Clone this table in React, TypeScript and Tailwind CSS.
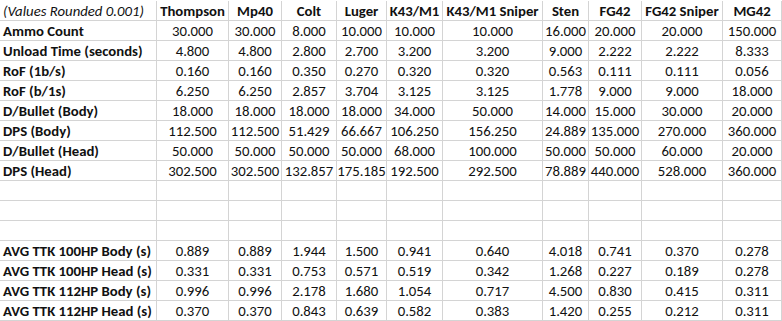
import React from "react";

const headers = ["Thompson", "Mp40", "Colt", "Luger", "K43/M1", "K43/M1 Sniper", "Sten", "FG42", "FG42 Sniper", "MG42"];

const rows: [string, string[]][] = [
  ["Ammo Count", ["30.000", "30.000", "8.000", "10.000", "10.000", "10.000", "16.000", "20.000", "20.000", "150.000"]],
  ["Unload Time (seconds)", ["4.800", "4.800", "2.800", "2.700", "3.200", "3.200", "9.000", "2.222", "2.222", "8.333"]],
  ["RoF (1b/s)", ["0.160", "0.160", "0.350", "0.270", "0.320", "0.320", "0.563", "0.111", "0.111", "0.056"]],
  ["RoF (b/1s)", ["6.250", "6.250", "2.857", "3.704", "3.125", "3.125", "1.778", "9.000", "9.000", "18.000"]],
  ["D/Bullet (Body)", ["18.000", "18.000", "18.000", "18.000", "34.000", "50.000", "14.000", "15.000", "30.000", "20.000"]],
  ["DPS (Body)", ["112.500", "112.500", "51.429", "66.667", "106.250", "156.250", "24.889", "135.000", "270.000", "360.000"]],
  ["D/Bullet (Head)", ["50.000", "50.000", "50.000", "50.000", "68.000", "100.000", "50.000", "50.000", "60.000", "20.000"]],
  ["DPS (Head)", ["302.500", "302.500", "132.857", "175.185", "192.500", "292.500", "78.889", "440.000", "528.000", "360.000"]],
  ["", ["", "", "", "", "", "", "", "", "", ""]],
  ["", ["", "", "", "", "", "", "", "", "", ""]],
  ["", ["", "", "", "", "", "", "", "", "", ""]],
  ["AVG TTK 100HP Body (s)", ["0.889", "0.889", "1.944", "1.500", "0.941", "0.640", "4.018", "0.741", "0.370", "0.278"]],
  ["AVG TTK 100HP Head (s)", ["0.331", "0.331", "0.753", "0.571", "0.519", "0.342", "1.268", "0.227", "0.189", "0.278"]],
  ["AVG TTK 112HP Body (s)", ["0.996", "0.996", "2.178", "1.680", "1.054", "0.717", "4.500", "0.830", "0.415", "0.311"]],
  ["AVG TTK 112HP Head (s)", ["0.370", "0.370", "0.843", "0.639", "0.582", "0.383", "1.420", "0.255", "0.212", "0.311"]],
];

const cell = "h-[20px] border-r border-b border-[#d4d4d4] leading-[20px] whitespace-nowrap overflow-visible";

export default function App() {
  return (
    <div
      className="w-[782px] h-[321px] bg-white text-[#111] pt-px text-[14.75px] overflow-hidden"
      style={{ fontFamily: "Carlito, Calibri, Lato, 'Liberation Sans', sans-serif" }}
    >
      <div className="grid grid-cols-[157px_72px_53px_55px_50px_56px_100px_46px_53px_81px_59px]">
        <div className={`${cell} italic pl-[3px]`}>(Values Rounded 0.001)</div>
        {headers.map((h) => (
          <div key={h} className={`${cell} font-bold text-center`}>
            {h}
          </div>
        ))}
        {rows.map(([label, vals], i) => (
          <React.Fragment key={i}>
            <div className={`${cell} font-bold pl-[3px]`}>{label}</div>
            {vals.map((v, j) => (
              <div key={j} className={`${cell} text-center`}>
                {v}
              </div>
            ))}
          </React.Fragment>
        ))}
      </div>
    </div>
  );
}
